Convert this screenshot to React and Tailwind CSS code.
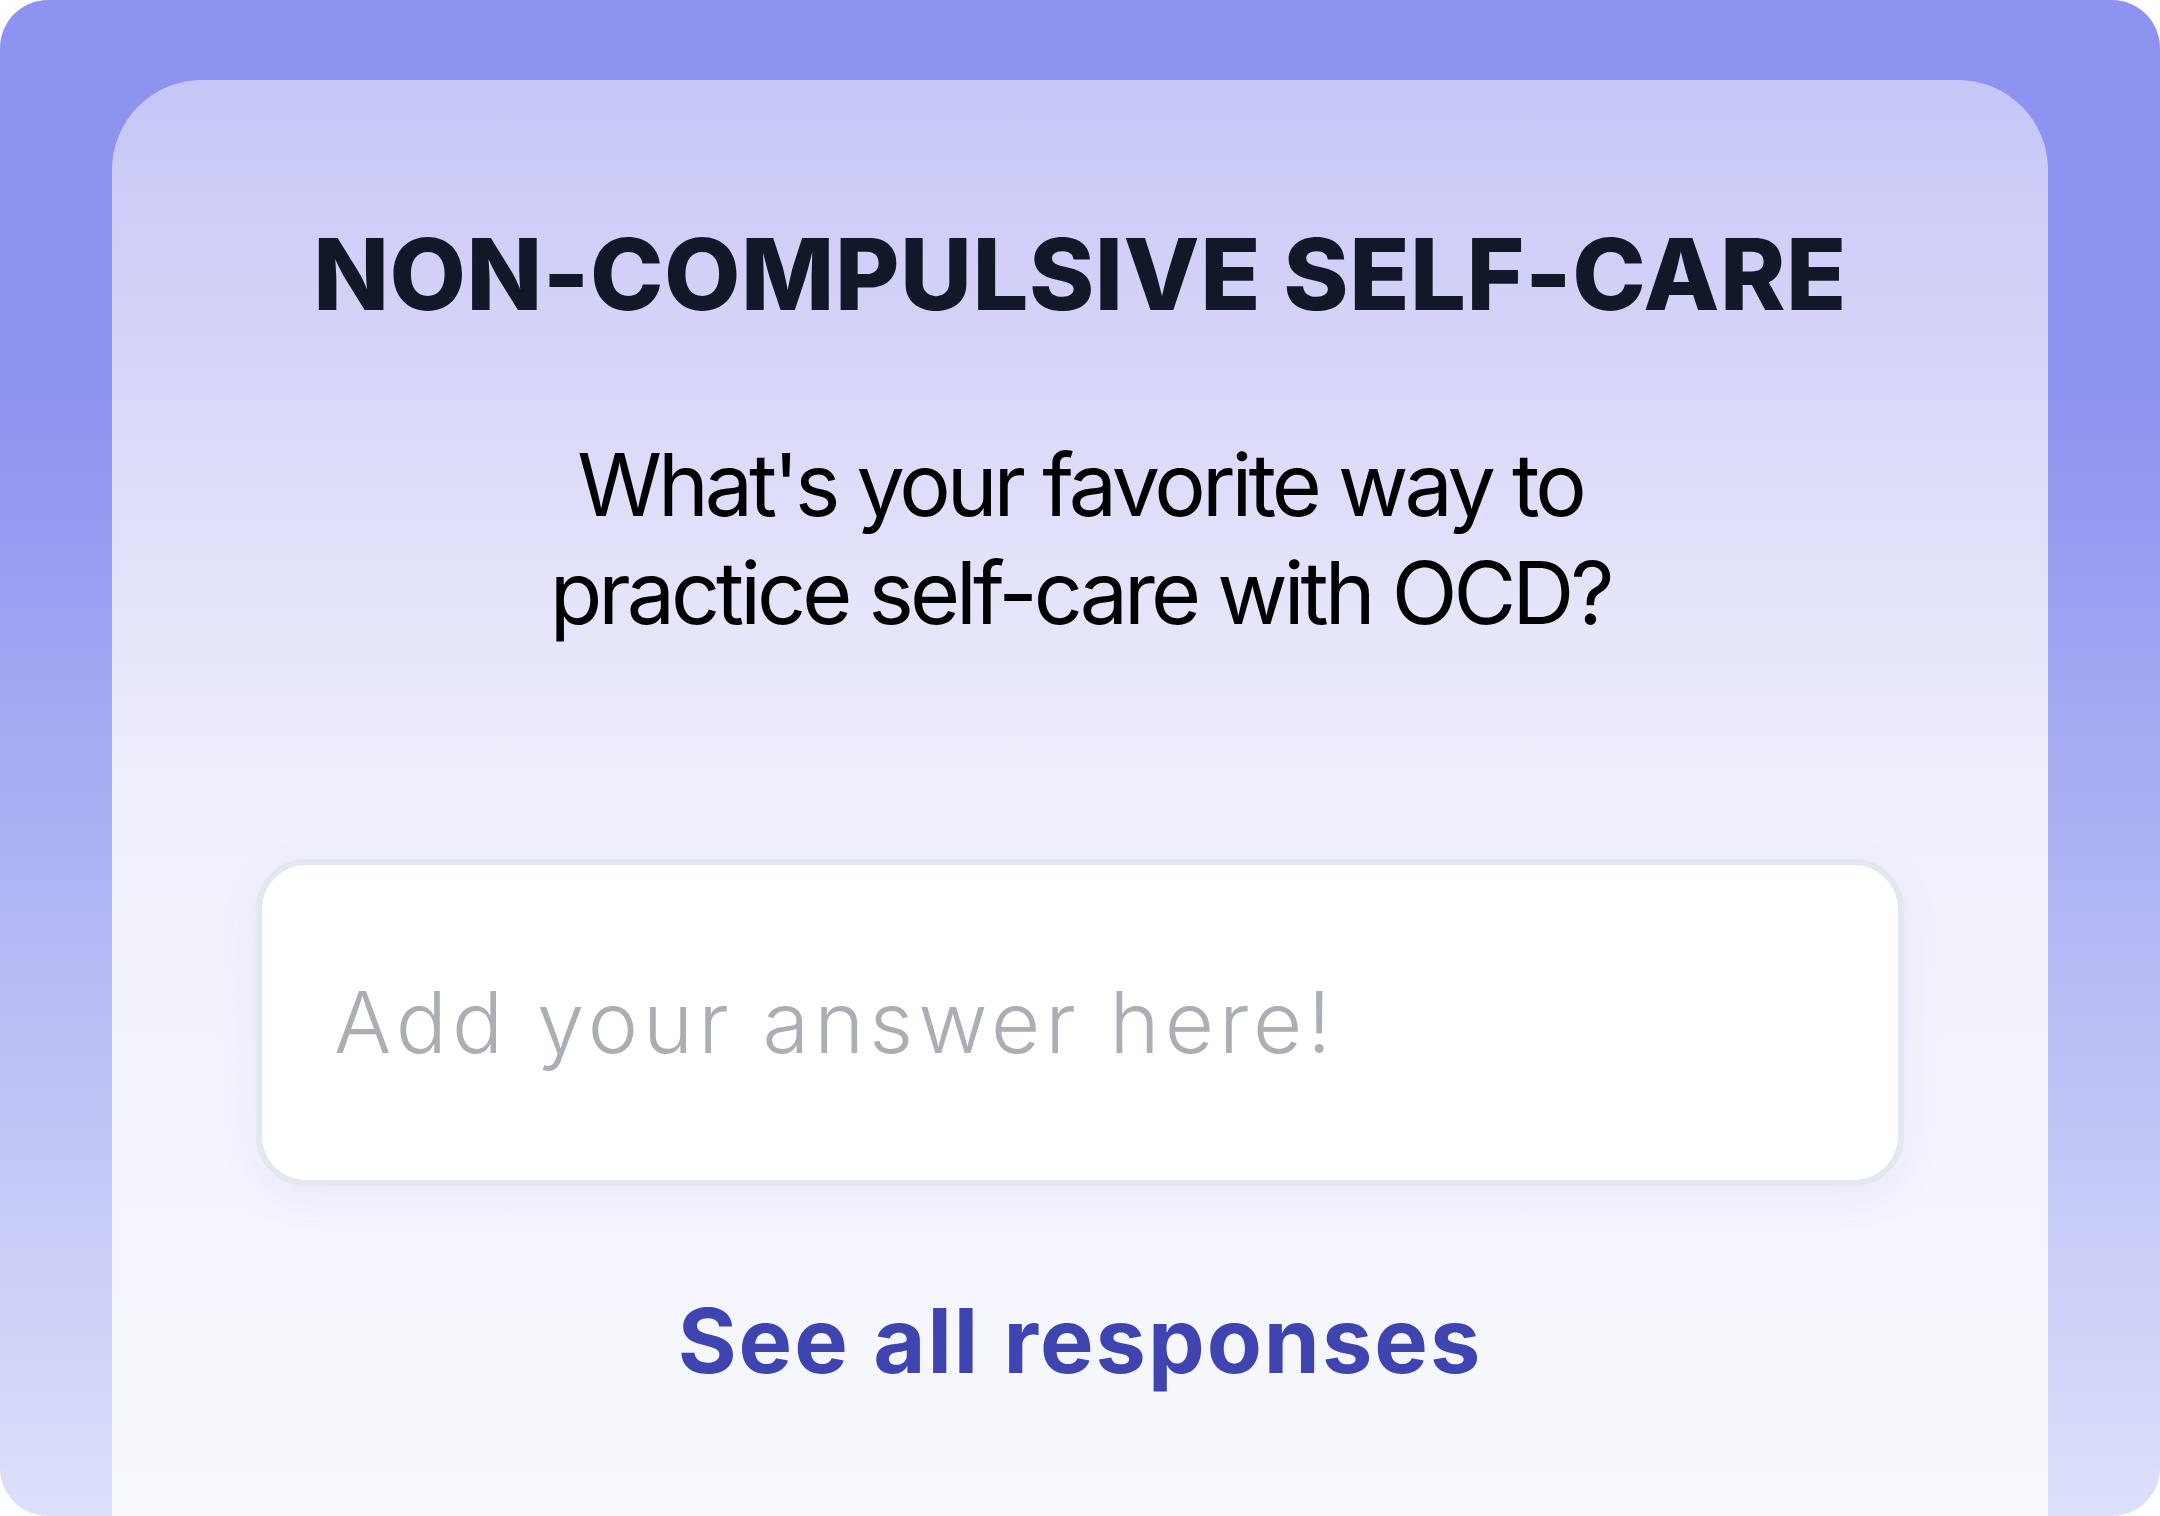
import React from 'react'

export default function App() {
  return (
    <div className="min-h-screen bg-white">
      <div className="h-[1516px] overflow-hidden rounded-[48px] bg-[linear-gradient(to_bottom,#8d93f0_0%,#8d93f0_26%,#dde0fa_100%)] px-[112px] pt-[80px]">
        <div className="flex h-full flex-col items-center rounded-t-[90px] bg-[linear-gradient(to_bottom,#c6c6f7_0%,#f0f0fc_51%,#f8f8fe_100%)] px-[144px] pt-[145px]">
          <h1 className="font-['Inter',sans-serif] text-[99px] font-extrabold uppercase leading-none tracking-[0.5px] whitespace-nowrap text-[#111827]">
            Non-compulsive self-care
          </h1>

          <p className="mt-[107px] text-center font-['Inter',sans-serif] text-[86px] leading-[108px] tracking-[-4px] text-black">
            What's your favorite way to
            <br />
            practice self-care with OCD?
          </p>

          <div className="mt-[212px] flex h-[327px] w-full items-center rounded-[50px] border-[6px] border-[#e2e8f0] bg-white pl-[72px] shadow-[0_12px_40px_rgba(99,102,241,0.08)]">
            <span className="font-['Inter',sans-serif] text-[85px] font-light leading-none tracking-[5px] text-[#abaeb5]">
              Add your answer here!
            </span>
          </div>

          <a
            href="#"
            className="mt-[110px] font-['Inter',sans-serif] text-[90px] font-bold leading-none tracking-[2px] text-[#3e45b0]"
          >
            See all responses
          </a>
        </div>
      </div>
    </div>
  )
}
